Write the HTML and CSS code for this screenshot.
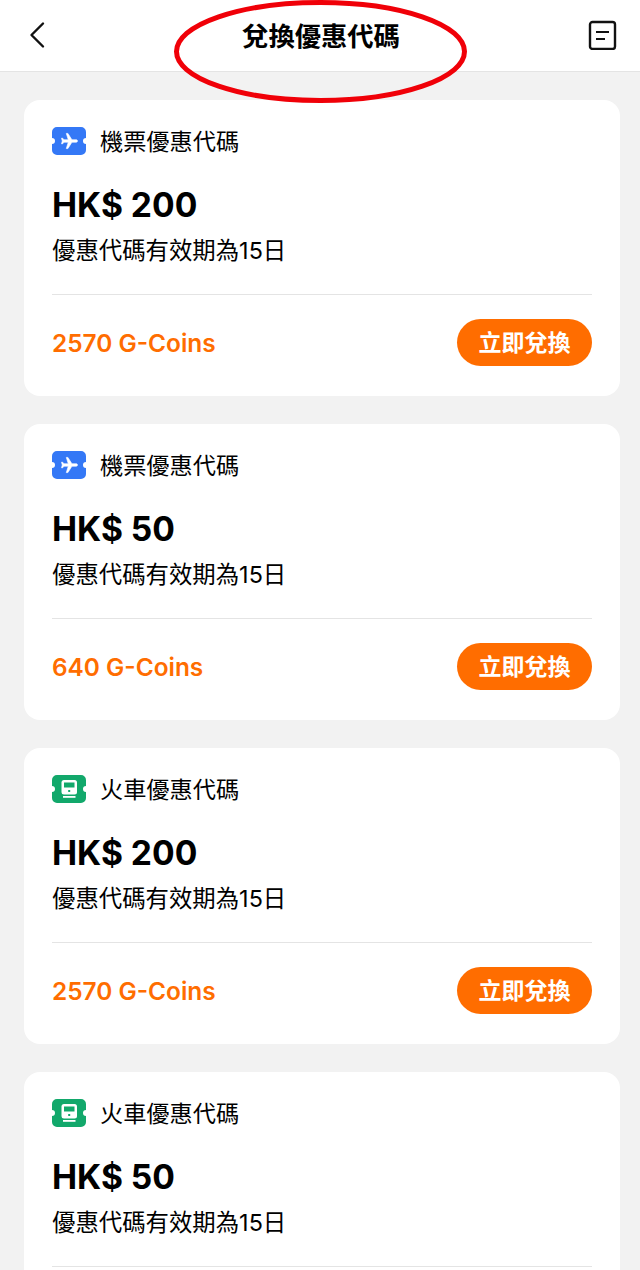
FILE: index.html
```html
<!DOCTYPE html>
<html lang="zh-Hant">
<head>
    <meta name="viewport" content="width=device-width, initial-scale=1.0" />
    <meta charset="UTF-8" />
    <title>兌換優惠代碼</title>
    <link rel="stylesheet" href="styles.css">
</head>
<body>

    <header class="top-bar">
        <svg class="icon-back" width="18" height="28" viewBox="0 0 18 28">
            <path d="M15 2.5 L3.5 14 L15 25.5" fill="none" stroke="#111" stroke-width="2.4" stroke-linecap="round" stroke-linejoin="round" />
        </svg>
        <h1>兌換優惠代碼</h1>
        <svg class="icon-list" width="30" height="30" viewBox="0 0 30 30">
            <rect x="2" y="2" width="25" height="27" rx="2.5" fill="none" stroke="#111" stroke-width="2.4" />
            <path d="M8 12 H21 M8 19 H17" fill="none" stroke="#111" stroke-width="2.2" />
        </svg>
    </header>

    <!-- 手繪紅圈 -->
    <svg class="circle-mark" width="300" height="108" viewBox="0 0 300 108">
        <ellipse cx="147.500" cy="51.500" rx="144" ry="49" fill="none" stroke="#f00008" stroke-width="5" />
    </svg>

    <main class="list">

        <section class="card">
            <div class="card-type">
                <svg class="ticket" width="34" height="28" viewBox="0 0 34 28">
                    <path class="ticket-blue" d="M5 0 H29 A5 5 0 0 1 34 5 V11 A3 3 0 0 0 34 17 V23 A5 5 0 0 1 29 28 H5 A5 5 0 0 1 0 23 V17 A3 3 0 0 0 0 11 V5 A5 5 0 0 1 5 0 Z" />
                    <g transform="translate(17.500 14) rotate(90) scale(0.8) translate(-11.500 -12)">
                        <path class="plane" d="M21 16v-2l-8-5V3.500c0-.83-.67-1.500-1.500-1.500S10 2.670 10 3.500V9l-8 5v2l8-2.500V19l-2 1.500V22l3.500-1 3.500 1v-1.500L13 19v-5.500l8 2.500z" />
                    </g>
                </svg>
                <span>機票優惠代碼</span>
            </div>
            <div class="amount">HK$ 200</div>
            <div class="valid">優惠代碼有效期為15日</div>
            <div class="card-foot">
                <span class="coins">2570 G-Coins</span>
                <button class="btn-redeem">立即兌換</button>
            </div>
        </section>

        <section class="card">
            <div class="card-type">
                <svg class="ticket" width="34" height="28" viewBox="0 0 34 28">
                    <path class="ticket-blue" d="M5 0 H29 A5 5 0 0 1 34 5 V11 A3 3 0 0 0 34 17 V23 A5 5 0 0 1 29 28 H5 A5 5 0 0 1 0 23 V17 A3 3 0 0 0 0 11 V5 A5 5 0 0 1 5 0 Z" />
                    <g transform="translate(17.500 14) rotate(90) scale(0.8) translate(-11.500 -12)">
                        <path class="plane" d="M21 16v-2l-8-5V3.500c0-.83-.67-1.500-1.500-1.500S10 2.670 10 3.500V9l-8 5v2l8-2.500V19l-2 1.500V22l3.500-1 3.500 1v-1.500L13 19v-5.500l8 2.500z" />
                    </g>
                </svg>
                <span>機票優惠代碼</span>
            </div>
            <div class="amount">HK$ 50</div>
            <div class="valid">優惠代碼有效期為15日</div>
            <div class="card-foot">
                <span class="coins">640 G-Coins</span>
                <button class="btn-redeem">立即兌換</button>
            </div>
        </section>

        <section class="card">
            <div class="card-type">
                <svg class="ticket" width="34" height="28" viewBox="0 0 34 28">
                    <path class="ticket-green" d="M5 0 H29 A5 5 0 0 1 34 5 V11 A3 3 0 0 0 34 17 V23 A5 5 0 0 1 29 28 H5 A5 5 0 0 1 0 23 V17 A3 3 0 0 0 0 11 V5 A5 5 0 0 1 5 0 Z" />
                    <rect x="9.500" y="5" width="15.500" height="14.500" rx="2.500" fill="#fff" />
                    <rect x="12" y="7.500" width="10.500" height="5" fill="#12a86b" />
                    <rect x="16.200" y="15" width="2" height="2" fill="#12a86b" />
                    <rect x="11" y="21" width="12.500" height="1.800" fill="#fff" />
                </svg>
                <span>火車優惠代碼</span>
            </div>
            <div class="amount">HK$ 200</div>
            <div class="valid">優惠代碼有效期為15日</div>
            <div class="card-foot">
                <span class="coins">2570 G-Coins</span>
                <button class="btn-redeem">立即兌換</button>
            </div>
        </section>

        <!-- 第四張卡片在畫面底部被切掉 -->
        <section class="card card-cut">
            <div class="card-type">
                <svg class="ticket" width="34" height="28" viewBox="0 0 34 28">
                    <path class="ticket-green" d="M5 0 H29 A5 5 0 0 1 34 5 V11 A3 3 0 0 0 34 17 V23 A5 5 0 0 1 29 28 H5 A5 5 0 0 1 0 23 V17 A3 3 0 0 0 0 11 V5 A5 5 0 0 1 5 0 Z" />
                    <rect x="9.500" y="5" width="15.500" height="14.500" rx="2.500" fill="#fff" />
                    <rect x="12" y="7.500" width="10.500" height="5" fill="#12a86b" />
                    <rect x="16.200" y="15" width="2" height="2" fill="#12a86b" />
                    <rect x="11" y="21" width="12.500" height="1.800" fill="#fff" />
                </svg>
                <span>火車優惠代碼</span>
            </div>
            <div class="amount">HK$ 50</div>
            <div class="valid">優惠代碼有效期為15日</div>
            <div class="card-foot"></div>
        </section>

    </main>

</body>
</html>
```

FILE: styles.css
```css
body {
    font-family: Inter, 'Noto Sans CJK TC', sans-serif;
    background: #f2f2f2;
    color: #000;
    margin: 0;
    height: 1270px;
    overflow: hidden;
    position: relative;
}

.top-bar {
    background: white;
    height: 71px;
    border-bottom: 1px solid #e4e4e4;
    display: flex;
    align-items: flex-start;
    justify-content: space-between;
    padding: 0 22px 0 28px;
}

.top-bar h1 {
    font-size: 26.300px;
    line-height: 36px;
    font-weight: 700;
    margin: 19px 0 0 8px;
}

.icon-back {
    margin-top: 21px;
}

.icon-list {
    margin-top: 20px;
}

.circle-mark {
    position: absolute;
    left: 173px;
    top: 0;
}

.list {
    display: flex;
    flex-direction: column;
    gap: 28px;
    padding: 28px 20.500px 0 24px;
}

.card {
    background: white;
    border-radius: 16px;
    padding: 27px 27.500px 0 28px;
    height: 296px;
    flex: none;
    box-sizing: border-box;
}

.card-cut {
    height: 198px;
    border-radius: 16px 16px 0 0;
}

.card-type {
    display: flex;
    align-items: center;
    gap: 14px;
    height: 28px;
    font-size: 23.200px;
}

.card-type span {
    margin-bottom: 3px;
}

.ticket {
    flex: none;
}

.ticket-blue {
    fill: #3478f6;
}

.ticket-green {
    fill: #12a86b;
}

.plane {
    fill: #fff;
    stroke: #fff;
    stroke-width: 0.8;
}

.amount {
    font-size: 33.600px;
    line-height: 42px;
    font-weight: 700;
    margin-top: 29px;
}

.valid {
    font-size: 23.400px;
    line-height: 34px;
    margin-top: 8px;
}

.card-foot {
    border-top: 1px solid #e4e4e4;
    margin-top: 26px;
    padding-top: 24px;
    display: flex;
    align-items: center;
    justify-content: space-between;
}

.coins {
    color: #ff6d00;
    font-size: 24.400px;
    font-weight: 600;
}

.btn-redeem {
    background: #ff6d00;
    color: white;
    border: none;
    height: 47px;
    width: 135px;
    border-radius: 24px;
    padding: 0 0 4px;
    font-family: inherit;
    font-size: 23px;
    font-weight: 700;
}
```
